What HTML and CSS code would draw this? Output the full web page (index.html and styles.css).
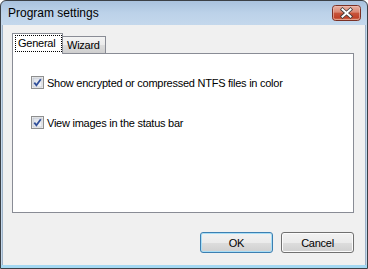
FILE: index.html
```html
<!DOCTYPE html>
<html>
<head>
<meta charset="utf-8">
<link rel="stylesheet" href="styles.css">
</head>
<body>
<div class="window">
  <div class="titlebar">
    <span class="title">Program settings</span>
    <span class="close">
      <svg width="29" height="16" viewBox="0 0 29 16">
        <defs>
          <linearGradient id="rg" x1="0" y1="0" x2="0" y2="1">
            <stop offset="0" stop-color="#eab3a6"/>
            <stop offset="0.45" stop-color="#d98772"/>
            <stop offset="0.5" stop-color="#c8553b"/>
            <stop offset="0.8" stop-color="#c0432a"/>
            <stop offset="1" stop-color="#d8805f"/>
          </linearGradient>
        </defs>
        <rect x="0.5" y="0.5" width="28" height="15" rx="3" ry="3" fill="url(#rg)" stroke="#7a3024"/>
        <rect x="1.5" y="1.5" width="26" height="13" rx="2" ry="2" fill="none" stroke="#f0c2b6" stroke-opacity="0.6"/>
        <path d="M10.5 4.5 L18.5 11.5 M18.5 4.5 L10.5 11.5" stroke="#3a3a3a" stroke-width="3.6" stroke-linecap="square"/>
        <path d="M10.5 4.5 L18.5 11.5 M18.5 4.5 L10.5 11.5" stroke="#ffffff" stroke-width="2" stroke-linecap="square"/>
      </svg>
    </span>
  </div>
  <div class="client">
    <div class="tabs">
      <div class="tab tab-active"><span class="focus">General</span></div>
      <div class="tab tab-inactive">Wizard</div>
    </div>
    <div class="panel">
      <div class="check check-first">
        <span class="box">
          <svg width="13" height="13" viewBox="0 0 13 13">
            <defs>
              <linearGradient id="bg" x1="0" y1="0" x2="1" y2="1">
                <stop offset="0" stop-color="#d9dee6"/>
                <stop offset="1" stop-color="#f7f8fa"/>
              </linearGradient>
            </defs>
            <rect x="0.5" y="0.5" width="12" height="12" fill="#f4f4f4" stroke="#8e8f8f"/>
            <rect x="2" y="2" width="9" height="9" fill="url(#bg)" stroke="#b4b9c2" stroke-width="0.6"/>
            <path d="M3.3 6.6 L5.4 9.2 L9.8 3.2" fill="none" stroke="#31509a" stroke-width="1.8"/>
          </svg>
        </span>
        <span class="label">Show encrypted or compressed NTFS files in color</span>
      </div>
      <div class="check check-second">
        <span class="box">
          <svg width="13" height="13" viewBox="0 0 13 13">
            <rect x="0.5" y="0.5" width="12" height="12" fill="#f4f4f4" stroke="#8e8f8f"/>
            <rect x="2" y="2" width="9" height="9" fill="url(#bg)" stroke="#b4b9c2" stroke-width="0.6"/>
            <path d="M3.3 6.6 L5.4 9.2 L9.8 3.2" fill="none" stroke="#31509a" stroke-width="1.8"/>
          </svg>
        </span>
        <span class="label">View images in the status bar</span>
      </div>
    </div>
    <div class="buttons">
      <button class="btn btn-default">OK</button>
      <button class="btn">Cancel</button>
    </div>
  </div>
</div>
</body>
</html>
```

FILE: styles.css
```css
* { box-sizing: border-box; }
html, body { margin: 0; padding: 0; background: #ffffff; }
body { font-family: "Liberation Sans", Arial, sans-serif; }

.window {
  width: 368px;
  height: 269px;
  border: 1px solid #3b4046;
  border-radius: 6px 6px 0 0;
  background: linear-gradient(to bottom, #a9c2de 0px, #bcd2e9 12px, #c4d8ec 24px, #c4d8ec 263px, #a4d8f2 264px, #a4d8f2 267px);
  display: flex;
  flex-direction: column;
  overflow: hidden;
}

.titlebar {
  height: 24px;
  flex: none;
  display: flex;
  align-items: flex-start;
  justify-content: space-between;
}
.title {
  font-size: 12px;
  color: #000;
  margin-left: 7px;
  margin-top: 5px;
  line-height: 14px;
}
.close {
  margin-top: 4px;
  margin-right: 6px;
  width: 29px;
  height: 16px;
  display: block;
}
.close svg { display: block; }

.client {
  flex: none;
  height: 240px;
  margin: 0 2px 3px 2px;
  background: #f0f0f0;
  box-shadow: -1px 0 0 #9fb3c8, 1px 0 0 #9fb3c8;
  display: flex;
  flex-direction: column;
  font-size: 11px;
  letter-spacing: -0.25px;
}

.tabs {
  margin: 8px 0 0 9px;
  height: 20px;
  display: flex;
  align-items: flex-end;
}
.tab {
  border: 1px solid #898c95;
  border-bottom: none;
  color: #000;
  line-height: 13px;
}
.tab-active {
  position: relative;
  z-index: 1;
  width: 51px;
  height: 21px;
  margin-bottom: -1px;
  background: #ffffff;
  padding: 1px 0 0 2px;
}
.focus {
  display: block;
  height: 17px;
  border: 1px dotted #000;
  padding: 1px 0 0 2px;
}
.tab-inactive {
  width: 43px;
  height: 17px;
  border-left: none;
  background: linear-gradient(to bottom, #f3f3f3 0%, #ebebeb 50%, #dddddd 51%, #cfcfcf 100%);
  padding: 2px 0 0 4px;
}

.panel {
  margin: 0 11px 0 9px;
  height: 160px;
  border: 1px solid #898c95;
  background: #ffffff;
  display: flex;
  flex-direction: column;
}
.check {
  display: flex;
  align-items: center;
  height: 13px;
  margin-left: 18px;
}
.check-first { margin-top: 22px; }
.check-second { margin-top: 27px; }
.box { width: 13px; height: 13px; display: block; flex: none; }
.box svg { display: block; }
.label {
  margin-left: 3px;
  color: #000;
  line-height: 13px;
  padding-top: 1px;
  white-space: nowrap;
}

.buttons {
  margin: 19px 11px 0 0;
  display: flex;
  justify-content: flex-end;
  gap: 8px;
}
.btn {
  width: 73px;
  height: 21px;
  margin: 0;
  padding: 0;
  font-family: "Liberation Sans", Arial, sans-serif;
  font-size: 11px;
  letter-spacing: -0.25px;
  color: #000;
  border: 1px solid #707070;
  border-radius: 3px;
  background: linear-gradient(to bottom, #f2f2f2 0%, #ebebeb 50%, #dddddd 51%, #cfcfcf 100%);
  box-shadow: inset 0 0 0 1px #fbfbfb;
}
.btn-default {
  border-color: #3c7fb1;
  box-shadow: inset 0 0 0 1px #a9def6;
}
```
